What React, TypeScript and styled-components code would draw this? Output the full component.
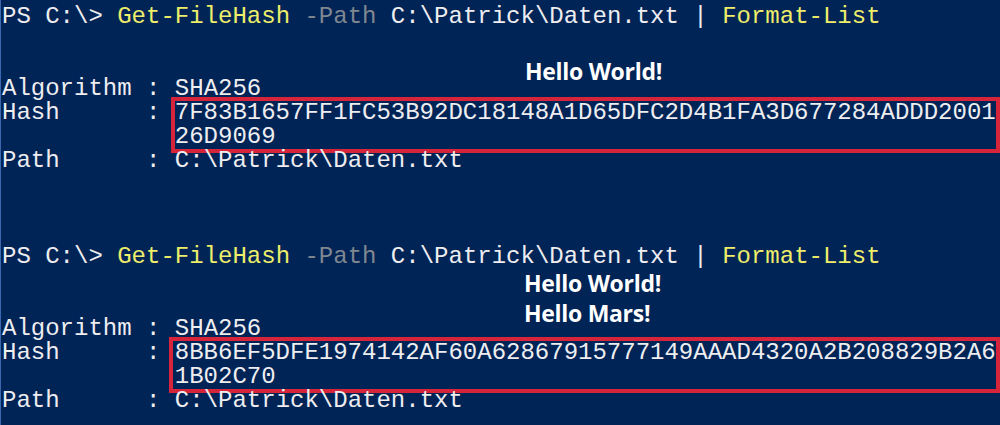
import React from "react";
import styled, { createGlobalStyle } from "styled-components";

const GlobalStyle = createGlobalStyle`
  html, body {
    margin: 0;
    padding: 0;
    background: #012456;
    overflow: hidden;
  }
`;

const Terminal = styled.div`
  position: relative;
  box-sizing: border-box;
  width: 1000px;
  height: 425px;
  padding: 5px 0 0 1px;
  background: #012456;
  border-left: 1px solid #3a69b0;
  color: #eeedf0;
  font-family: "Liberation Mono", "DejaVu Sans Mono", monospace;
  font-size: 24px;
  line-height: 24px;
  display: flex;
  flex-direction: column;
`;

const Line = styled.div`
  height: 24px;
  white-space: pre;
`;

const Row = styled.div`
  display: flex;
  align-items: flex-start;
  white-space: pre;
`;

const Label = styled.span`
  width: 158.4px;
  flex: none;
`;

const Cmd = styled.span`
  color: #eded6a;
`;

const Param = styled.span`
  color: #7f8791;
`;

const HashBox = styled.div<{ $inset: number }>`
  flex: 1;
  display: flex;
  flex-direction: column;
  margin: -4px 1px -4px ${(p) => 14.4 - p.$inset}px;
  padding: 0 0 0 ${(p) => p.$inset - 4}px;
  border: 4px solid #d6253a;
`;

const HashLine = styled.div`
  height: 24px;
  white-space: pre;
`;

const Notes = styled.div<{ $top: number; $left: number }>`
  position: absolute;
  top: ${(p) => p.$top}px;
  left: ${(p) => p.$left}px;
  display: flex;
  flex-direction: column;
`;

const Note = styled.div`
  color: #ffffff;
  font-family: "Open Sans", "Noto Sans", sans-serif;
  font-weight: 700;
  font-size: 23px;
  line-height: 30px;
  letter-spacing: -0.3px;
`;

const Prompt: React.FC = () => (
  <Line>
    PS C:\&gt; <Cmd>Get-FileHash</Cmd> <Param>-Path</Param> C:\Patrick\Daten.txt |{" "}
    <Cmd>Format-List</Cmd>
  </Line>
);

const Result: React.FC<{ hash: [string, string]; inset: number }> = ({ hash, inset }) => (
  <>
    <Line>Algorithm : SHA256</Line>
    <Row>
      <Label>Hash      :</Label>
      <HashBox $inset={inset}>
        <HashLine>{hash[0]}</HashLine>
        <HashLine>{hash[1]}</HashLine>
      </HashBox>
    </Row>
    <Line>Path      : C:\Patrick\Daten.txt</Line>
  </>
);

export default function App() {
  return (
    <>
      <GlobalStyle />
      <Terminal>
        <Prompt />
        <Line />
        <Line />
        <Result
          hash={["7F83B1657FF1FC53B92DC18148A1D65DFC2D4B1FA3D677284ADDD2001", "26D9069"]}
          inset={4}
        />
        <Line />
        <Line />
        <Line />
        <Prompt />
        <Line />
        <Line />
        <Result
          hash={["8BB6EF5DFE1974142AF60A62867915777149AAAD4320A2B208829B2A6", "1B02C70"]}
          inset={6}
        />
        <Notes $top={56} $left={524}>
          <Note>Hello World!</Note>
        </Notes>
        <Notes $top={268} $left={523}>
          <Note>Hello World!</Note>
          <Note>Hello Mars!</Note>
        </Notes>
      </Terminal>
    </>
  );
}
